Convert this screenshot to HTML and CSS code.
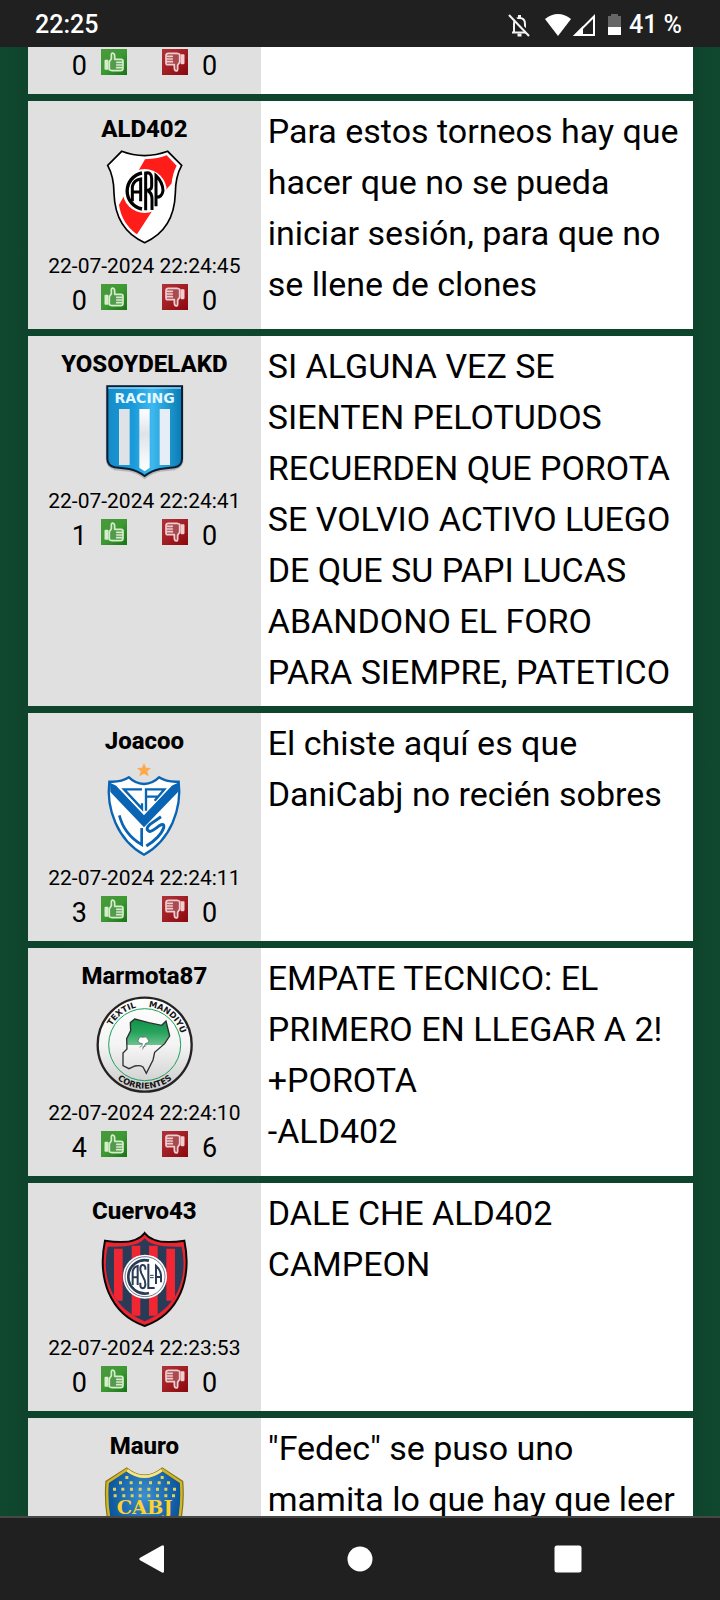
FILE: index.html
```html
<!DOCTYPE html>
<html lang="es">
<head>
<meta charset="utf-8">
<meta name="viewport" content="width=device-width, initial-scale=1">
<title>Foro</title>
<link rel="stylesheet" href="styles.css">
</head>
<body>
<svg class="defs" aria-hidden="true">
  <defs>
    <linearGradient id="g-up" x1="0" y1="0" x2="1" y2="1"><stop offset="0" stop-color="#4a9a3c"/><stop offset=".5" stop-color="#3d9a33"/><stop offset="1" stop-color="#187317"/></linearGradient>
    <linearGradient id="g-down" x1="0" y1="0" x2="1" y2="1"><stop offset="0" stop-color="#b0333a"/><stop offset=".5" stop-color="#a01f24"/><stop offset="1" stop-color="#8a080d"/></linearGradient>
    <g id="hand" stroke-linejoin="round" stroke-linecap="round" stroke-width="5">
      <path d="M25 38 31 29V18Q31 12 35 12Q41 13 41 21V31H61Q66 31 66 37V58Q66 65 59 65H33L25 62Z"/>
      <path d="M47 40H64M47 48H64M47 56H62" fill="none"/>
      <path d="M13 35H20V60H13Z" fill="currentColor"/>
    </g>
    <symbol id="thumb-up" viewBox="0 0 78 78"><rect width="78" height="78" fill="url(#g-up)"/><use href="#hand" color="#d5edca" fill="#539a4c" stroke="#d5edca"/></symbol>
    <symbol id="thumb-down" viewBox="0 0 78 78"><rect width="78" height="78" fill="url(#g-down)"/><use href="#hand" color="#f0ced0" fill="#a84b50" stroke="#f0ced0" transform="rotate(180 39 39)"/></symbol>
  </defs>
</svg>
<div class="screen">
  <header class="status">
    <time class="clock">22:25</time>
    <div class="status-icons">
      <svg class="bell" viewBox="0 0 24 24" aria-hidden="true"><path d="M5 19.500H20M7 19V11Q7 5 12.500 5Q18 5 18 11V19" fill="none" stroke="#f4f4f4" stroke-width="2"/><path d="M12.500 2V5M10.500 22H14.500" stroke="#f4f4f4" stroke-width="3"/><path d="M4 1 24 23" stroke="#202020" stroke-width="3"/><path d="M2 2 22 23" stroke="#f4f4f4" stroke-width="2"/></svg>
      <svg class="wifi" viewBox="0 0 26 22" aria-hidden="true"><path d="M0 5Q13-5 26 5L13 22Z" fill="#fff"/></svg>
      <svg class="signal" viewBox="0 0 22 22" aria-hidden="true"><path d="M2.500 21H21V2.500Z" fill="none" stroke="#fff" stroke-width="2"/><path d="M0 22 10 12V22Z" fill="#fff"/></svg>
      <svg class="battery" viewBox="0 0 13 21" aria-hidden="true"><path d="M0 2H3V0H10V2H13V21H0Z" fill="#666"/><path d="M0 13H13V21H0Z" fill="#fff"/></svg>
      <span>41 %</span>
    </div>
  </header>

  <main class="feed">
    <article class="post post-cut">
      <div class="author">
        <div class="votes"><span>0</span><button aria-label="Me gusta"><svg><use href="#thumb-up"/></svg></button><button class="down" aria-label="No me gusta"><svg><use href="#thumb-down"/></svg></button><span>0</span></div>
      </div>
    </article>

    <article class="post">
      <div class="author">
        <h2>ALD402</h2>
        <svg class="crest" viewBox="228 177 291 291" role="img" aria-label="River Plate">
          <path d="M305 184Q373 210 443 184L485 226Q466 260 466 310C464 374 438 430 374 458C310 430 284 374 282 310Q282 260 263 226Z" fill="#fff"/>
          <path d="M375 208Q416 206 440 196L470 227Q457 252 455 280L436 302 351 433Q305 400 297 344L310 322Z" fill="#ff1d19"/>
          <path d="M305 184Q373 210 443 184L485 226Q466 260 466 310C464 374 438 430 374 458C310 430 284 374 282 310Q282 260 263 226Z" fill="none" stroke="#000" stroke-width="5"/>
          <circle cx="374" cy="303" r="66" fill="#fff"/>
          <g fill="none" stroke="#000" stroke-width="9">
            <path d="M366 249A55 55 0 0 0 366 357" stroke-width="10"/>
            <path d="M337 334V290Q341 270 362 267V334M337 306H362"/>
            <path d="M377 361V249Q395 246 395 266V288Q395 301 379 301M384 303Q396 308 396 328V360"/>
            <path d="M408 349V257Q428 276 429 302Q426 322 408 322"/>
          </g>
        </svg>
        <time>22-07-2024 22:24:45</time>
        <div class="votes"><span>0</span><button aria-label="Me gusta"><svg><use href="#thumb-up"/></svg></button><button class="down" aria-label="No me gusta"><svg><use href="#thumb-down"/></svg></button><span>0</span></div>
      </div>
      <p class="message">Para estos torneos hay que hacer que no se pueda iniciar sesión, para que no se llene de clones</p>
    </article>

    <article class="post">
      <div class="author">
        <h2>YOSOYDELAKD</h2>
        <svg class="crest" viewBox="228 162 291 291" role="img" aria-label="Racing Club">
          <defs>
            <linearGradient id="racing"><stop offset="0" stop-color="#168cc8"/><stop offset=".35" stop-color="#1a9bda"/><stop offset=".6" stop-color="#3db9ef"/><stop offset="1" stop-color="#087bb5"/></linearGradient>
            <linearGradient id="bar" x1="0" y1="0" x2="0" y2="1"><stop offset="0" stop-color="#fff"/><stop offset=".4" stop-color="#dfe3e8"/><stop offset="1" stop-color="#fff"/></linearGradient>
          </defs>
          <path d="M263 171H485V386Q486 409 464 415L420 420Q398 423 374 441Q350 423 328 420L284 415Q263 408 263 386Z" fill="#777" stroke="#777" stroke-width="11" opacity=".4"/>
          <path d="M262 169H486V386Q486 408 464 412L420 417Q397 421 374 438Q350 421 328 417L284 412Q262 406 262 386Z" fill="url(#racing)" stroke="#0a1d36" stroke-width="6"/>
          <path d="M265 174H483" stroke="#8ed5f5" stroke-width="5"/>
          <path d="M297 237H329V405H297Z" fill="#dfe2e7"/>
          <path d="M358 237H389V413L374 424 358 413Z" fill="url(#bar)"/>
          <path d="M419 237H450V405H419Z" fill="#e5eef7"/>
          <text class="racing" x="374" y="220" text-anchor="middle">RACING</text>
        </svg>
        <time>22-07-2024 22:24:41</time>
        <div class="votes"><span>1</span><button aria-label="Me gusta"><svg><use href="#thumb-up"/></svg></button><button class="down" aria-label="No me gusta"><svg><use href="#thumb-down"/></svg></button><span>0</span></div>
      </div>
      <p class="message">SI ALGUNA VEZ SE SIENTEN PELOTUDOS RECUERDEN QUE POROTA SE VOLVIO ACTIVO LUEGO DE QUE SU PAPI LUCAS ABANDONO EL FORO PARA SIEMPRE, PATETICO</p>
    </article>

    <article class="post">
      <div class="author">
        <h2>Joacoo</h2>
        <svg class="crest" viewBox="228 183 291 291" role="img" aria-label="Vélez Sarsfield">
          <path d="M372 189 378 203 393 204 382 214 386 229 372 221 358 229 362 214 351 204 366 203Z" fill="#ffa94d"/>
          <path d="M268 245Q304 247 327 232Q345 250 372 252Q399 250 417 232Q440 247 476 245C486 325 452 420 372 464C292 420 258 325 268 245Z" fill="#fff" stroke="#0964b4" stroke-width="7"/>
          <path d="M270 248 289 257 372 345 455 257 474 248V276L372 382 271 276Z" fill="#0964b4"/>
          <path d="M289 257Q311 254 327 243Q346 260 372 262Q398 260 417 243Q434 254 455 257L372 345Z" fill="#fff"/>
          <g fill="none" stroke="#0964b4" stroke-width="7">
            <path d="M366 268H312L366 326V310"/>
            <path d="M378 332V268H433L404 302M378 290H412"/>
            <path d="M298 346Q312 402 365 434V384" stroke-width="8"/>
            <path d="M423 350 390 373Q374 387 388 394Q395 396 418 377Q434 367 431 384Q421 412 379 438" stroke-width="9"/>
          </g>
        </svg>
        <time>22-07-2024 22:24:11</time>
        <div class="votes"><span>3</span><button aria-label="Me gusta"><svg><use href="#thumb-up"/></svg></button><button class="down" aria-label="No me gusta"><svg><use href="#thumb-down"/></svg></button><span>0</span></div>
      </div>
      <p class="message">El chiste aquí es que DaniCabj no recién sobres</p>
    </article>

    <article class="post">
      <div class="author">
        <h2>Marmota87</h2>
        <svg class="crest" viewBox="228 168 291 291" role="img" aria-label="Textil Mandiyú">
          <defs>
            <linearGradient id="ring" x1="0" y1="0" x2="0" y2="1"><stop offset="0" stop-color="#fff"/><stop offset=".5" stop-color="#f4f4f4"/><stop offset="1" stop-color="#c9c9c9"/></linearGradient>
            <linearGradient id="land" gradientUnits="userSpaceOnUse" x1="0" y1="236" x2="0" y2="400"><stop offset="0" stop-color="#0e9247"/><stop offset=".25" stop-color="#27a35d"/><stop offset=".48" stop-color="#6cc28f"/><stop offset=".48" stop-color="#f7f7f7"/><stop offset="1" stop-color="#dedede"/></linearGradient>
            <path id="arc-top" d="M260 314A114 114 0 0 1 488 314"/>
            <path id="arc-bottom" d="M242 314A132 132 0 0 0 506 314"/>
          </defs>
          <circle cx="374" cy="314" r="141" fill="url(#ring)" stroke="#252224" stroke-width="7"/>
          <circle cx="374" cy="314" r="108" fill="none" stroke="#18a05a" stroke-width="3"/>
          <path d="M344 237 386 248 425 256 438 243 449 288 434 311 404 337 399 360 379 400 369 381Q360 375 345 378L327 386 309 377V339L321 327 320 296 332 272 331 248Z" fill="url(#land)" stroke="#303030" stroke-width="4"/>
          <path d="M368 311Q349 309 356 297Q359 288 369 292Q379 287 383 297Q392 307 377 310L367 329M368 315 359 322M367 322 379 317" fill="#fff" stroke="#555" stroke-width="2"/>
          <g class="ring-text"><text><textPath href="#arc-top" startOffset="58">TEXTIL</textPath></text><text><textPath href="#arc-top" startOffset="190">MANDIYÚ</textPath></text><text><textPath href="#arc-bottom" startOffset="50%" text-anchor="middle">CORRIENTES</textPath></text></g>
        </svg>
        <time>22-07-2024 22:24:10</time>
        <div class="votes"><span>4</span><button aria-label="Me gusta"><svg><use href="#thumb-up"/></svg></button><button class="down" aria-label="No me gusta"><svg><use href="#thumb-down"/></svg></button><span>6</span></div>
      </div>
      <p class="message">EMPATE TECNICO: EL PRIMERO EN LLEGAR A 2!<br>+POROTA<br>-ALD402</p>
    </article>

    <article class="post">
      <div class="author">
        <h2>Cuervo43</h2>
        <svg class="crest" viewBox="228 171 291 291" role="img" aria-label="San Lorenzo">
          <clipPath id="slz"><path d="M374 193Q352 222 263 218Q247 291 276 355Q306 414 374 442Q442 414 472 355Q501 291 485 218Q396 222 374 193Z"/></clipPath>
          <path d="M374 177Q346 215 255 200Q237 286 266 356Q298 430 374 456Q450 430 482 356Q511 286 493 200Q402 215 374 177Z" fill="#ed2431" stroke="#080808" stroke-width="6"/>
          <path d="M374 193Q352 222 263 218Q247 291 276 355Q306 414 374 442Q442 414 472 355Q501 291 485 218Q396 222 374 193Z" fill="#293b57"/>
          <g clip-path="url(#slz)"><path d="M295 224V380M348 215V425M400 215V425M452 224V380" stroke="#f02732" stroke-width="26"/></g>
          <circle cx="375" cy="308" r="66" fill="#fff"/>
          <circle cx="375" cy="308" r="60" fill="none" stroke="#293b57" stroke-width="2"/>
          <g fill="none" stroke="#293b57" stroke-width="6">
            <path d="M387 260A50 50 0 1 0 387 357" stroke-width="8"/>
            <path d="M338 333V292Q341 279 353 276V333M338 310H353"/>
            <path d="M376 287V280Q374 272 367 273Q361 274 361 284Q361 294 368 306Q377 321 376 333Q375 343 368 343Q361 342 361 334V326"/>
            <path d="M385 269V342H404"/>
            <path d="M408 330V275Q421 286 423 303V325M408 309H423"/>
            <path d="M390 304H401M390 311H401" stroke-width="3"/>
          </g>
        </svg>
        <time>22-07-2024 22:23:53</time>
        <div class="votes"><span>0</span><button aria-label="Me gusta"><svg><use href="#thumb-up"/></svg></button><button class="down" aria-label="No me gusta"><svg><use href="#thumb-down"/></svg></button><span>0</span></div>
      </div>
      <p class="message">DALE CHE ALD402 CAMPEON</p>
    </article>

    <article class="post">
      <div class="author">
        <h2>Mauro</h2>
        <svg class="crest" viewBox="228 201 291 291" role="img" aria-label="Boca Juniors">
          <defs>
            <radialGradient id="boca" cx=".5" cy=".3"><stop offset="0" stop-color="#3b8fd0"/><stop offset="1" stop-color="#09539b"/></radialGradient>
          </defs>
          <path d="M320 211Q373 253 427 211L485 249Q490 310 478 370Q450 445 373 480Q296 445 268 370Q256 310 261 249Z" fill="url(#boca)" stroke="#7f741b" stroke-width="10"/>
          <path d="M320 212Q373 252 427 212L483 250Q488 310 476 370Q449 443 373 476Q297 443 270 370Q258 310 263 250Z" fill="none" stroke="#d4b625" stroke-width="7"/>
          <path d="M322 214Q373 252 425 214" fill="none" stroke="#f4e58b" stroke-width="8"/>
          <path d="M316 231h9v9h-9zM422 231h9v9h-9zM297 247h9v9h-9zM329 247h9v9h-9zM357 247h9v9h-9zM387 247h9v9h-9zM413 247h9v9h-9zM441 247h9v9h-9zM279 266h9v9h-9zM304 266h9v9h-9zM330 266h9v9h-9zM356 266h9v9h-9zM382 266h9v9h-9zM408 266h9v9h-9zM433 266h9v9h-9zM459 266h9v9h-9zM281 286h9v9h-9zM307 286h9v9h-9zM332 286h9v9h-9zM356 286h9v9h-9zM382 286h9v9h-9zM408 286h9v9h-9zM433 286h9v9h-9zM456 286h9v9h-9z" fill="#dfd15c"/>
          <text class="cabj" x="374" y="346" text-anchor="middle">CABJ</text>
        </svg>
      </div>
      <p class="message">"Fedec" se puso uno mamita lo que hay que leer</p>
    </article>
  </main>

  <nav class="navbar">
    <button aria-label="Atrás"><svg viewBox="0 0 28 30"><path d="M2.500 13.500 24 1.500Q26 .5 26 3V27Q26 29.500 24 28.500L2.500 16.500Q0 15 2.500 13.500Z"/></svg></button>
    <button aria-label="Inicio"><svg viewBox="0 0 28 30"><circle cx="14" cy="15" r="12.500"/></svg></button>
    <button aria-label="Recientes"><svg viewBox="0 0 28 30"><rect x=".5" y="1.500" width="27" height="27" rx="2.500"/></svg></button>
  </nav>
</div>
</body>
</html>
```
FILE: styles.css
```css
* { box-sizing: border-box; }
body {
  margin: 0;
  font-family: Roboto, "Liberation Sans", sans-serif;
  color: #000;
  background: #0e452d;
}
h2, p { margin: 0; }
button {
  padding: 0;
  border: 0;
  background: none;
}
.defs {
  position: absolute;
  width: 0;
  height: 0;
}
.screen {
  display: flex;
  flex-direction: column;
  height: 100vh;
  overflow: hidden;
}

.status {
  flex: none;
  display: flex;
  align-items: center;
  justify-content: space-between;
  height: 47px;
  padding: 2px 38px 0 35px;
  background: #202020;
  color: #fff;
  font-size: 25px;
  font-weight: 500;
}
.status-icons {
  display: flex;
  align-items: center;
}
.bell { width: 24px; height: 24px; margin-right: 14px; }
.wifi { width: 26px; height: 22px; margin-right: 2px; }
.signal { width: 22px; height: 22px; margin-right: 13px; }
.battery { width: 13px; height: 21px; margin-right: 8px; }

.feed {
  flex: 1;
  min-height: 0;
  overflow: hidden;
  display: flex;
  flex-direction: column;
  gap: 7px;
  padding: 0 27px 0 28px;
  background: linear-gradient(90deg, #10482f, #0e442c 28px, #0e452d 50%, #0e442c 693px, #10482f 100%);
}
.post {
  flex: none;
  display: grid;
  grid-template-columns: 35% 1fr;
  background: #fff;
}
.author {
  display: flex;
  flex-direction: column;
  align-items: center;
  padding: 10px 0 19px;
  background: #e0e0e0;
}
.post-cut .author { padding-top: 2px; }
.author h2 {
  font-size: 24px;
  line-height: 36px;
  font-weight: 800;
}
.crest {
  width: 97px;
  height: 97px;
  margin: 2px 0;
}
.author time {
  font-size: 21px;
  line-height: 36px;
}
.votes {
  display: flex;
  align-items: flex-end;
  height: 26px;
  font-size: 27px;
  line-height: 18px;
}
.votes button, .votes svg {
  display: block;
  width: 26px;
  height: 26px;
}
.votes button { margin: 0 0 0 14px; }
.votes .down { margin: 0 14px 0 35px; }
.message {
  padding: 5px 14px 8px 7px;
  font-size: 34px;
  line-height: 51px;
}

.racing { font: bold 42px "DejaVu Sans", sans-serif; fill: #e4f6ff; }
.ring-text { font: bold 25px "DejaVu Sans", sans-serif; fill: #151515; }
.cabj { font: bold 58px "DejaVu Serif", serif; fill: #ffd12f; }

.navbar {
  flex: none;
  display: grid;
  grid-template-columns: repeat(3, 1fr);
  height: 84px;
  padding: 0 48px;
  border-top: 2px solid #474747;
  background: #202020;
}
.navbar button {
  display: flex;
  align-items: center;
  justify-content: center;
}
.navbar svg {
  width: 28px;
  height: 30px;
  fill: #fff;
}
```
